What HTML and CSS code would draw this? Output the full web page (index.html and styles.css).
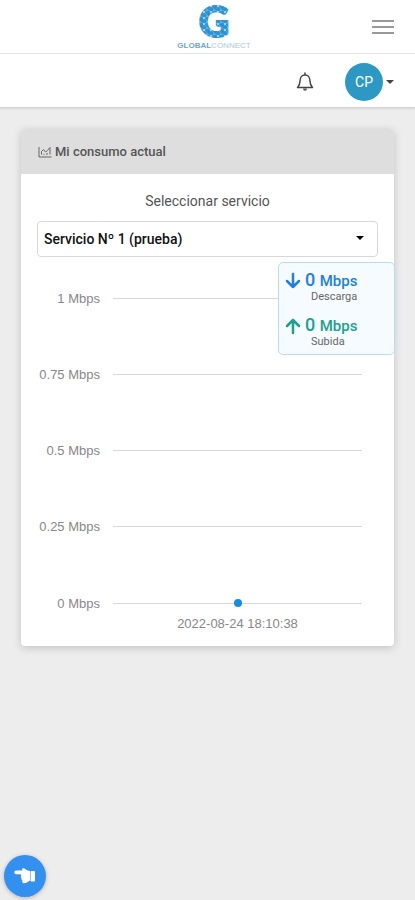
FILE: index.html
```html
<!DOCTYPE html>
<html lang="es">
<head>
<meta charset="utf-8">
<meta name="viewport" content="width=device-width, initial-scale=1">
<title>Mi consumo actual</title>
<link rel="stylesheet" href="styles.css">
</head>
<body>
<header class="brandbar">
  <a class="logo" href="#">
    <svg class="logo-mark" viewBox="0 0 40 38" aria-hidden="true">
      <defs>
        <pattern id="mesh" width="7" height="6" patternUnits="userSpaceOnUse">
          <rect width="7" height="6" fill="#2f93d3"/>
          <path d="M0 1l3 2 4-2M3 3l-2 3M3 3l3 3" stroke="#69b4e2" stroke-width=".7" fill="none"/>
          <circle cx="3" cy="3" r="1" fill="#b5dcf3"/>
          <circle cx="6" cy="1" r=".7" fill="#8cc8ec"/>
          <circle cx="1" cy="5" r=".7" fill="#1b76b8"/>
        </pattern>
      </defs>
      <text class="logo-letter" x="20" y="34" text-anchor="middle" fill="url(#mesh)" stroke="url(#mesh)">G</text>
    </svg>
    <span class="logo-name"><b>GLOBAL</b>CONNECT</span>
  </a>
  <button class="menu" type="button" aria-label="Menú"><span></span><span></span><span></span></button>
</header>
<nav class="userbar">
  <button class="bell" type="button" aria-label="Notificaciones">
    <svg viewBox="0 0 18 20" aria-hidden="true"><path d="M9 1v2M1.500 15.500h15c-2-2-2.500-4-2.500-6.500C14 5.500 12 3 9 3S4 5.500 4 9c0 2.500-.5 4.500-2.500 6.500z" fill="none" stroke="#444" stroke-width="1.500" stroke-linejoin="round" stroke-linecap="round"/><path d="M7 16.500a2 2.200 0 0 0 4 0z" fill="#555"/></svg>
  </button>
  <button class="account" type="button"><span class="avatar">CP</span><span class="caret"></span></button>
</nav>
<main>
  <section class="card">
    <h1 class="card-head">
      <svg viewBox="0 0 14 12" aria-hidden="true"><path d="M1 1v10h12.500" /><path d="M3.500 8.500v-3l2-2 2 2.500 2-1.500 2.500-3v7"/><path d="M6 8v1M9 7v2"/></svg>
      Mi consumo actual
    </h1>
    <div class="card-body">
      <label class="label" for="service">Seleccionar servicio</label>
      <div class="select">
        <select id="service"><option>Servicio Nº 1 (prueba)</option></select>
        <span class="caret"></span>
      </div>
      <div class="chart">
        <div class="row"><span>1 Mbps</span><i class="line"></i></div>
        <div class="row"><span>0.75 Mbps</span><i class="line"></i></div>
        <div class="row"><span>0.5 Mbps</span><i class="line"></i></div>
        <div class="row"><span>0.25 Mbps</span><i class="line"></i></div>
        <div class="row"><span>0 Mbps</span><i class="line base"><i class="dot"></i></i></div>
        <div class="time">2022-08-24 18:10:38</div>
        <aside class="speeds">
          <div class="speed down">
            <svg viewBox="0 0 16 18" aria-hidden="true"><path d="M8 2v13M2 9l6 6 6-6"/></svg>
            <strong>0 <small>Mbps</small></strong>
            <span>Descarga</span>
          </div>
          <div class="speed up">
            <svg viewBox="0 0 16 18" aria-hidden="true"><path d="M8 16V3M2 9l6-6 6 6"/></svg>
            <strong>0 <small>Mbps</small></strong>
            <span>Subida</span>
          </div>
        </aside>
      </div>
    </div>
  </section>
</main>
<button class="help" type="button" aria-label="Ayuda">
  <svg viewBox="0 0 22 16" aria-hidden="true"><path fill="#fff" d="M2 2.500h6.500C7.500 1.300 8.500-.2 9.800.3c1.500.6 2.400 1.800 4 2.200l2.200.5v9.500L13.500 14c-1.500 1.500-4.500 1.500-5 .5-.4-.6-.3-1.200 0-1.700-1-.4-1.300-1.500-.8-2.300-1-.6-1.200-2-.4-2.800L6.500 6.200H2C-.2 6.200-.2 2.500 2 2.500z"/><rect x="16.500" y="3" width="4.500" height="10.500" rx="1" fill="#fff"/><path d="M16.300 3.500v9.500" stroke="#8fc2f6" stroke-width=".6"/></svg>
</button>
</body>
</html>
```

FILE: styles.css
```css
* { box-sizing: border-box; }
body {
  margin: 0;
  min-height: 100vh;
  background: #ededed;
  font-family: Roboto, "Liberation Sans", sans-serif;
  font-size: 13px;
  color: #555;
}
button { padding: 0; border: 0; background: none; font: inherit; }

.brandbar {
  display: grid;
  grid-template-columns: 1fr auto 1fr;
  align-items: center;
  height: 54px;
  padding: 0 21px;
  background: #fff;
  border-bottom: 1px solid #e4e4e4;
}
.logo {
  grid-column: 2;
  display: flex;
  flex-direction: column;
  align-items: center;
  margin-left: 13px;
  text-decoration: none;
}
.logo-mark { width: 40px; height: 38px; overflow: visible; }
.logo-letter { font: 900 42px Lato, sans-serif; stroke-width: 2; }
.logo-name {
  font: 8px/10px "Liberation Sans", sans-serif;
  color: #a9cbe3;
}
.logo-name b { color: #6fa5cd; }
.menu {
  justify-self: end;
  display: grid;
  gap: 4px;
  width: 22px;
}
.menu span { height: 2px; background: #999; }

.userbar {
  display: flex;
  justify-content: flex-end;
  align-items: center;
  gap: 31px;
  height: 54px;
  padding: 3px 21px 0;
  background: #fff;
  border-bottom: 1px solid #d4d4d4;
  box-shadow: 0 1px 2px #0000001a;
}
.bell svg { display: block; width: 18px; height: 20px; }
.account { display: flex; align-items: center; gap: 3px; }
.avatar {
  width: 38px;
  height: 38px;
  border-radius: 50%;
  background: #2e98c4;
  color: #fff;
  font-size: 14px;
  line-height: 38px;
}
.caret {
  border: 4px solid transparent;
  border-top-color: #444;
  border-bottom: 0;
}

main { padding: 21px 21px 0; }
.card {
  background: #fff;
  border-radius: 4px;
  box-shadow: 0 2px 8px #0000002e;
}
.card-head {
  display: flex;
  align-items: center;
  gap: 3px;
  height: 45px;
  margin: 0;
  padding: 0 17px;
  border-radius: 4px 4px 0 0;
  background: #dedede;
  font-size: 13px;
  font-weight: 500;
}
.card-head svg {
  width: 14px;
  height: 12px;
  fill: none;
  stroke: #666;
}
.card-body { padding: 18px 16px 12px; }
.label {
  display: block;
  line-height: 18px;
  margin-bottom: 11px;
  font-size: 14px;
  text-align: center;
}
.select { position: relative; }
.select select {
  appearance: none;
  display: block;
  width: 100%;
  height: 36px;
  padding: 0 6px;
  border: 1px solid #d8d8d8;
  border-radius: 4px;
  background: #fff;
  color: #111;
  font: 500 14px Roboto, sans-serif;
}
.select .caret {
  position: absolute;
  right: 14px;
  top: 15px;
  border-top-color: #000;
  pointer-events: none;
}

.chart {
  position: relative;
  padding: 3px 16px 0 0;
  color: #888;
  font-family: "Liberation Sans", sans-serif;
}
.row {
  display: grid;
  grid-template-columns: 63px 1fr;
  gap: 13px;
  align-items: center;
  height: 76px;
  text-align: right;
}
.row:nth-child(5) { height: 78px; }
.line { height: 1px; background: #d8d8d8; }
.base { display: flex; align-items: center; justify-content: center; }
.dot {
  width: 8px;
  height: 8px;
  flex: none;
  border-radius: 50%;
  background: #168de2;
}
.time {
  margin: -28px 0 0 76px;
  line-height: 20px;
  text-align: center;
}

.speeds {
  position: absolute;
  top: 5px;
  right: -17px;
  width: 117px;
  padding: 7px 6px 6px;
  border: 1px solid #b9dcf5;
  border-radius: 5px;
  background: #f5fbff;
  font-family: Roboto, sans-serif;
}
.speed {
  display: grid;
  grid-template-columns: 16px 1fr;
  column-gap: 4px;
  align-items: center;
}
.speed + .speed { margin-top: 12px; }
.speed svg {
  width: 16px;
  height: 18px;
  fill: none;
  stroke: currentColor;
  stroke-width: 2.5;
  stroke-linecap: round;
  stroke-linejoin: round;
}
.speed strong { font-size: 18px; font-weight: 500; line-height: 20px; }
.speed small { font-size: 15px; }
.speed span {
  grid-column: 2;
  padding-left: 6px;
  color: #666;
  font-size: 11px;
  line-height: 12px;
}
.down { color: #2380df; }
.up { color: #1f9f91; }

.help {
  position: fixed;
  left: 4px;
  bottom: 3px;
  display: grid;
  place-items: center;
  width: 42px;
  height: 42px;
  border-radius: 50%;
  background: #3490ee;
  box-shadow: 0 1px 4px #00000040;
}
.help svg { width: 22px; height: 16px; }
```
